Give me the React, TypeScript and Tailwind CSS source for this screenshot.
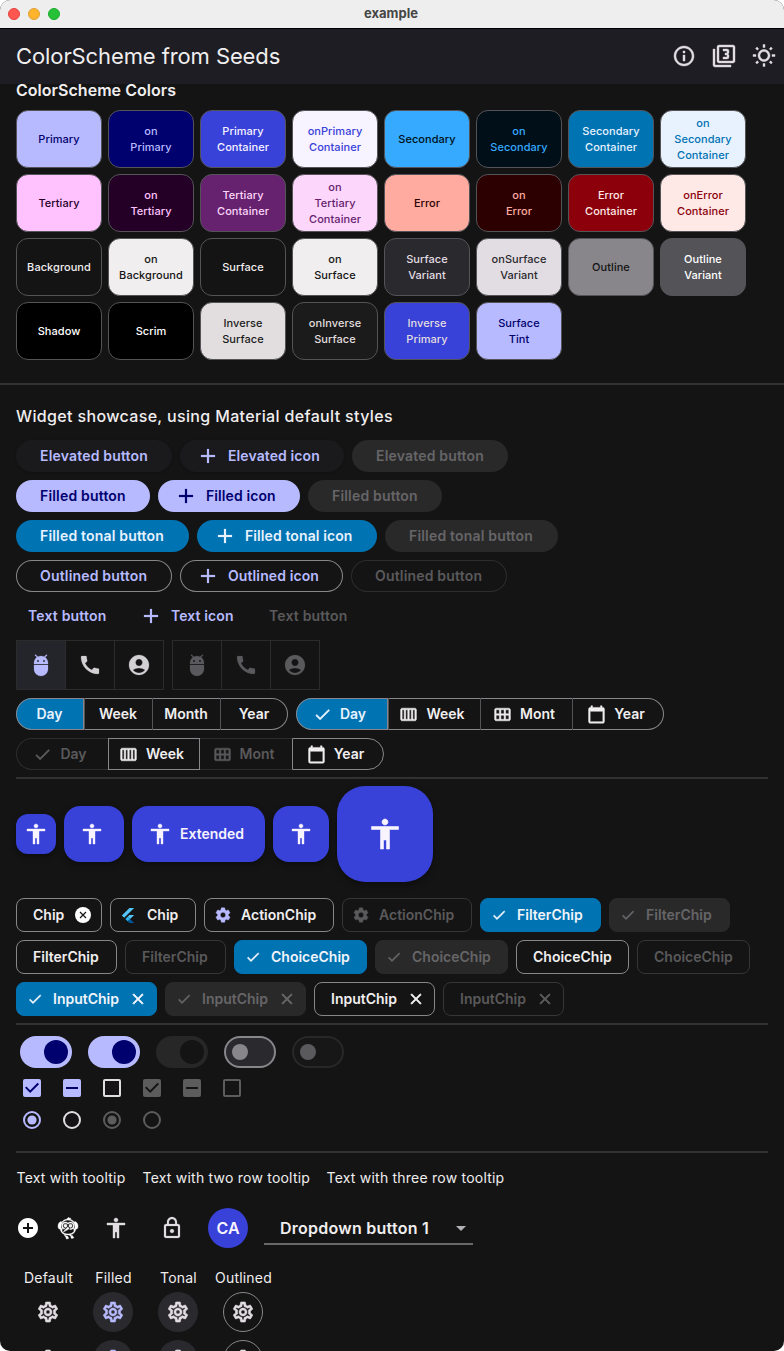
import type { ReactNode } from "react";
import {
  MdAccessibility,
  MdAccountCircle,
  MdAdb,
  MdAdd,
  MdAddCircle,
  MdArrowDropDown,
  MdCalendarToday,
  MdCalendarViewMonth,
  MdCalendarViewWeek,
  MdCall,
  MdCheck,
  MdClose,
  MdFlutterDash,
  MdInfoOutline,
  MdLockOutline,
  MdOutlineFilter3,
  MdOutlineSettings,
  MdOutlineWbSunny,
  MdSettings,
} from "react-icons/md";

const swatches: [string, string][] = [
  ["Primary", "bg-[#b7baff] text-[#00006e]"],
  ["on\nPrimary", "bg-[#00006e] text-[#b7baff]"],
  ["Primary\nContainer", "bg-[#3841d8] text-[#f7f3ff]"],
  ["onPrimary\nContainer", "bg-[#f7f3ff] text-[#3841d8]"],
  ["Secondary", "bg-[#35aaff] text-[#000f18]"],
  ["on\nSecondary", "bg-[#000f18] text-[#35aaff]"],
  ["Secondary\nContainer", "bg-[#0073b2] text-[#e8f2ff]"],
  ["on\nSecondary\nContainer", "bg-[#e8f2ff] text-[#0073b2]"],
  ["Tertiary", "bg-[#ffc2ff] text-[#240026]"],
  ["on\nTertiary", "bg-[#240026] text-[#ffc2ff]"],
  ["Tertiary\nContainer", "bg-[#66226e] text-[#fdd7fb]"],
  ["on\nTertiary\nContainer", "bg-[#fdd7fb] text-[#66226e]"],
  ["Error", "bg-[#ffaba0] text-[#2c0000]"],
  ["on\nError", "bg-[#2c0000] text-[#ffaba0]"],
  ["Error\nContainer", "bg-[#8b000b] text-[#ffe9e6]"],
  ["onError\nContainer", "bg-[#ffe9e6] text-[#8b000b]"],
  ["Background", "bg-[#141414] text-[#f0eeef]"],
  ["on\nBackground", "bg-[#f0eeef] text-[#141414]"],
  ["Surface", "bg-[#141414] text-[#f0eeef]"],
  ["on\nSurface", "bg-[#f0eeef] text-[#141414]"],
  ["Surface\nVariant", "bg-[#2a292e] text-[#e2dde3]"],
  ["onSurface\nVariant", "bg-[#e2dde3] text-[#2a292e]"],
  ["Outline", "bg-[#88868a] text-[#141414]"],
  ["Outline\nVariant", "bg-[#545358] text-white"],
  ["Shadow", "bg-black text-white"],
  ["Scrim", "bg-black text-white"],
  ["Inverse\nSurface", "bg-[#e2dedf] text-[#1b1b1b]"],
  ["onInverse\nSurface", "bg-[#1b1b1b] text-[#e2dedf]"],
  ["Inverse\nPrimary", "bg-[#3841d8] text-[#e2dedf]"],
  ["Surface\nTint", "bg-[#b7baff] text-[#00006e]"],
];

// Thickens glyph paths while leaving the invisible bounding-box path alone.
const heavy = "[&_path:not([fill=none])]:stroke-[0.6px]";
const medium = "[&_path:not([fill=none])]:stroke-[0.4px]";
const light = "[&_path:not([fill=none])]:stroke-[0.2px]";

function Button({ w, look, icon, children }: { w: string; look: string; icon?: boolean; children: ReactNode }) {
  return (
    <button
      className={`flex h-8 shrink-0 items-center rounded-full text-[14px] font-semibold whitespace-nowrap ${light} ${icon ? "gap-2 pl-4 tracking-[0.1px]" : "pl-6 tracking-[0.18px]"} ${w} ${look}`}
    >
      {icon && <MdAdd size={24} />}
      <span className="-mt-0.5">{children}</span>
    </button>
  );
}

function Row({ children, className = "" }: { children: ReactNode; className?: string }) {
  return <div className={`flex gap-2 ${className}`}>{children}</div>;
}

function Toggle({ active }: { active: boolean }) {
  return (
    <div className={`flex h-[50px] w-[148px] border border-[#2b2b2c] ${light} ${active ? "text-[#d3d0d4]" : "text-[#5a595c]"}`}>
      <div className={`flex w-[49px] items-center justify-center border-r border-[#2b2b2c] ${active ? "bg-[#24252b] text-[#b7baff]" : ""}`}>
        <MdAdb size={24} />
      </div>
      <div className="flex w-[49px] items-center justify-center border-r border-[#2b2b2c]">
        <MdCall size={24} />
      </div>
      <div className="flex w-12 items-center justify-center">
        <MdAccountCircle size={24} />
      </div>
    </div>
  );
}

function Segment({ look, icon, wide, children }: { look: string; icon?: ReactNode; wide?: boolean; children: ReactNode }) {
  return (
    <div className={`flex h-8 items-center justify-center gap-2 text-[14px] font-semibold ${heavy} ${wide ? "w-[92px] pr-[5px]" : "w-[68px] pr-px"} ${look}`}>
      {icon}
      <span className="-mt-0.5">{children}</span>
    </div>
  );
}

function Chip({ w, look, icon, tail, children }: { w: string; look: string; icon?: ReactNode; tail?: ReactNode; children: ReactNode }) {
  return (
    <div className={`flex h-[34px] shrink-0 items-center rounded-lg border pr-2 text-[14px] font-semibold whitespace-nowrap ${icon ? "gap-2 pl-2" : "pl-4"} ${w} ${look}`}>
      {icon && <span className={`flex w-5 justify-center ${heavy}`}>{icon}</span>}
      <span className="-mt-0.5">{children}</span>
      {tail && <span className="ml-auto flex w-5 justify-center">{tail}</span>}
    </div>
  );
}

const outlined = "border-[#88868a] text-[#f0eeef]";
const outlinedOff = "border-[#363638] text-[#5a595b]";
const selected = "border-[#0073b2] bg-[#0073b2] text-[#f0f4fb]";
const selectedOff = "border-[#292929] bg-[#292929] text-[#666568]";

function Divider() {
  return <div className="h-0.5 shrink-0 bg-[#313132]" />;
}

function FlutterMark() {
  return (
    <svg width="14" height="17" viewBox="0 0 166 202" className="-ml-0.5">
      <g stroke="none">
        <path fill="#54c5f8" d="M37.7 128.9 9.8 101 100.4 10.4h55.8z" />
        <path fill="#54c5f8" d="M156.2 94h-55.8L79.5 114.9l27.9 27.9z" />
        <path fill="#01579b" d="m79.5 170.7 20.9 20.9h55.8l-48.8-48.8z" />
        <path fill="#29b6f6" d="m51.7 142.8 27.8-27.8 27.9 27.8-27.9 27.9z" />
      </g>
    </svg>
  );
}

function CancelGlyph() {
  return (
    <svg width="16" height="16" viewBox="0 0 16 16">
      <circle cx="8" cy="8" r="8" fill="white" />
      <path d="M5 5l6 6M11 5l-6 6" stroke="#141414" strokeWidth="1.2" />
    </svg>
  );
}

function CloseGlyph() {
  return (
    <span className="flex [&_path:not([fill=none])]:stroke-[0.9px]">
      <MdClose size={18} />
    </span>
  );
}

function Switch({ track, thumb }: { track: string; thumb: string }) {
  return (
    <div className={`flex h-8 w-[52px] items-center rounded-full ${track}`}>
      <div className={`rounded-full ${thumb}`} />
    </div>
  );
}

function Box({ look, children }: { look: string; children?: ReactNode }) {
  return <div className={`flex size-[18px] items-center justify-center rounded-[2px] ${look}`}>{children}</div>;
}

function CheckGlyph() {
  return (
    <svg width="18" height="18" viewBox="0 0 18 18" fill="none" stroke="currentColor" strokeWidth="2">
      <path d="M2.7 8.1 7.2 12.6 15.3 4.5" />
    </svg>
  );
}

function Radio({ tone, on }: { tone: string; on?: boolean }) {
  return (
    <svg width="18" height="18" viewBox="0 0 18 18" className={tone}>
      <circle cx="9" cy="9" r="8" fill="none" stroke="currentColor" strokeWidth="2" />
      {on && <circle cx="9" cy="9" r="4.6" fill="currentColor" />}
    </svg>
  );
}

function GearButtons() {
  return (
    <div className={`flex gap-[25px] pl-[12.4px] text-[#e2dde3] ${heavy}`}>
      <div className="flex size-10 items-center justify-center"><MdOutlineSettings size={24} /></div>
      <div className="flex size-10 items-center justify-center rounded-full bg-[#2a292e] text-[#b7baff]"><MdOutlineSettings size={24} /></div>
      <div className="flex size-10 items-center justify-center rounded-full bg-[#2a292e]"><MdOutlineSettings size={24} /></div>
      <div className="flex size-10 items-center justify-center rounded-full border border-[#88868a]"><MdOutlineSettings size={24} /></div>
    </div>
  );
}

const fab = "flex items-center bg-[#3841d8] text-[#f7f3ff] shadow-[0_3px_6px_rgba(0,0,0,0.35)]";

export default function App() {
  return (
    <div className="h-[1351px] w-[784px] overflow-hidden bg-white font-['Inter','Liberation_Sans',sans-serif]">
      <div className="flex h-full flex-col overflow-hidden rounded-[10px] bg-[#141414] text-[#f0eeef]">
        <div className="grid h-[29px] shrink-0 grid-cols-[1fr_auto_1fr] items-center border-b border-black bg-[#eeeeee]">
          <div className="flex gap-2 pl-2">
            <div className="size-3 rounded-full border border-[#e0443e] bg-[#ff5650]" />
            <div className="size-3 rounded-full border border-[#dea034] bg-[#fdb32c]" />
            <div className="size-3 rounded-full border border-[#1aab29] bg-[#27c138]" />
          </div>
          <div className="pr-0.5 text-[13px] font-bold text-[#454545]">example</div>
        </div>

        <header className="flex h-[55px] shrink-0 items-center justify-between bg-[#1e1d23] pr-2 pl-4">
          <h1 className="text-[22px] tracking-[-0.1px]">ColorScheme from Seeds</h1>
          <div className={`mb-px flex gap-4 text-[#e2dde3] ${medium}`}>
            <MdInfoOutline size={24} />
            <MdOutlineFilter3 size={24} />
            <MdOutlineWbSunny size={24} />
          </div>
        </header>

        <section className="flex shrink-0 flex-col px-4 pb-[23px]">
          <h2 className="h-[26px] text-[16px] leading-3 font-semibold tracking-[0.04px]">ColorScheme Colors</h2>
          <div className="grid grid-cols-[repeat(8,86px)] gap-1.5">
            {swatches.map(([name, look]) => (
              <div
                key={name}
                className={`flex h-[58px] items-center justify-center rounded-xl border border-[#545358] text-center text-[11px] leading-4 font-medium tracking-[0.05px] whitespace-pre-line ${look}`}
              >
                {name}
              </div>
            ))}
          </div>
        </section>
        <Divider />

        <main className="flex flex-1 flex-col overflow-hidden px-4 pt-[19px]">
          <h2 className="mb-3 text-[16px] leading-6 font-medium tracking-[0.35px]">Widget showcase, using Material default styles</h2>

          <div className="flex shrink-0 flex-col gap-2">
            <Row>
              <Button w="w-[156px]" look="bg-[#1a1a1d] text-[#b7baff] shadow-sm">Elevated button</Button>
              <Button w="w-[164px]" look="bg-[#1a1a1d] text-[#b7baff] shadow-sm" icon>Elevated icon</Button>
              <Button w="w-[156px]" look="bg-[#292929] text-[#666568]">Elevated button</Button>
            </Row>
            <Row>
              <Button w="w-[134px]" look="bg-[#b7baff] text-[#00006e]">Filled button</Button>
              <Button w="w-[142px]" look="bg-[#b7baff] text-[#00006e]" icon>Filled icon</Button>
              <Button w="w-[134px]" look="bg-[#292929] text-[#666568]">Filled button</Button>
            </Row>
            <Row>
              <Button w="w-[173px]" look="bg-[#0073b2] text-[#e8f2ff]">Filled tonal button</Button>
              <Button w="w-[180px]" look="bg-[#0073b2] text-[#e8f2ff]" icon>Filled tonal icon</Button>
              <Button w="w-[173px]" look="bg-[#292929] text-[#666568]">Filled tonal button</Button>
            </Row>
            <Row>
              <Button w="w-[156px]" look="inset-ring inset-ring-[#88868a] text-[#b7baff]">Outlined button</Button>
              <Button w="w-[163px]" look="inset-ring inset-ring-[#88868a] text-[#b7baff]" icon>Outlined icon</Button>
              <Button w="w-[156px]" look="inset-ring inset-ring-[#2d2d2e] text-[#5a595b]">Outlined button</Button>
            </Row>
            <div className="flex h-8 items-center text-[#b7baff]">
              <Button w="-ml-3 w-[135px]" look="">Text button</Button>
              <Button w="-ml-4 w-[134px]" look="" icon>Text icon</Button>
              <Button w="-ml-3 w-[120px]" look="text-[#5a595b]">Text button</Button>
            </div>
            <Row>
              <Toggle active />
              <Toggle active={false} />
            </Row>
            <Row>
              <div className="flex w-[272px] overflow-hidden rounded-full inset-ring inset-ring-[#88868a]">
                <Segment look="rounded-l-full bg-[#0073b2] text-[#e8f2ff] inset-ring inset-ring-[#88868a]">Day</Segment>
                <Segment look="border-l border-[#545358]">Week</Segment>
                <Segment look="border-l border-[#545358]">Month</Segment>
                <Segment look="border-l border-[#545358]">Year</Segment>
              </div>
              <div className="flex w-[368px] overflow-hidden rounded-full inset-ring inset-ring-[#88868a]">
                <Segment wide icon={<MdCheck size={19} />} look="rounded-l-full bg-[#0073b2] text-[#e8f2ff] inset-ring inset-ring-[#88868a]">Day</Segment>
                <Segment wide icon={<MdCalendarViewWeek size={19} />} look="border-l border-[#545358]">Week</Segment>
                <Segment wide icon={<MdCalendarViewMonth size={19} />} look="border-l border-[#545358]">Mont</Segment>
                <Segment wide icon={<MdCalendarToday size={19} />} look="border-l border-[#545358]">Year</Segment>
              </div>
            </Row>
            <div className="flex">
              <Segment wide icon={<MdCheck size={19} />} look="rounded-l-full border-y border-l border-[#2d2d2e] text-[#5a595b]">Day</Segment>
              <Segment wide icon={<MdCalendarViewWeek size={19} />} look="border border-[#88868a]">Week</Segment>
              <Segment wide icon={<MdCalendarViewMonth size={19} />} look="border-y border-[#2d2d2e] text-[#5a595b]">Mont</Segment>
              <Segment wide icon={<MdCalendarToday size={19} />} look="rounded-r-full border border-[#88868a]">Year</Segment>
            </div>
          </div>

          <div className="mt-[7px] mb-[7px]"><Divider /></div>

          <div className={`flex shrink-0 items-center gap-2 ${medium}`}>
            <div className={`${fab} size-10 justify-center rounded-xl`}><MdAccessibility size={24} /></div>
            <div className={`${fab} h-14 w-[60px] rounded-2xl pl-4`}><MdAccessibility size={24} /></div>
            <div className={`${fab} h-14 w-[133px] gap-2 rounded-2xl pl-4 text-[14px] font-semibold`}>
              <MdAccessibility size={24} />
              <span className="-mt-0.5">Extended</span>
            </div>
            <div className={`${fab} size-14 justify-center rounded-2xl`}><MdAccessibility size={24} /></div>
            <div className={`${fab} size-24 justify-center rounded-[28px]`}><MdAccessibility size={36} /></div>
          </div>

          <div className="mt-4 flex shrink-0 flex-col gap-2">
            <Row>
              <Chip w="w-[86px]" look={outlined} tail={<CancelGlyph />}>Chip</Chip>
              <Chip w="w-[86px]" look={outlined} icon={<FlutterMark />}>Chip</Chip>
              <Chip w="w-[130px]" look={outlined} icon={<MdSettings size={18} className="text-[#b7baff]" />}>ActionChip</Chip>
              <Chip w="w-[130px]" look={outlinedOff} icon={<MdSettings size={18} />}>ActionChip</Chip>
              <Chip w="w-[121px]" look={selected} icon={<MdCheck size={16} />}>FilterChip</Chip>
              <Chip w="w-[121px]" look={selectedOff} icon={<MdCheck size={16} />}>FilterChip</Chip>
            </Row>
            <Row>
              <Chip w="w-[101px]" look={outlined}>FilterChip</Chip>
              <Chip w="w-[101px]" look={outlinedOff}>FilterChip</Chip>
              <Chip w="w-[133px]" look={selected} icon={<MdCheck size={16} />}>ChoiceChip</Chip>
              <Chip w="w-[133px]" look={selectedOff} icon={<MdCheck size={16} />}>ChoiceChip</Chip>
              <Chip w="w-[113px]" look={outlined}>ChoiceChip</Chip>
              <Chip w="w-[113px]" look={outlinedOff}>ChoiceChip</Chip>
            </Row>
            <Row>
              <Chip w="w-[141px]" look={selected} icon={<MdCheck size={16} />} tail={<CloseGlyph />}>InputChip</Chip>
              <Chip w="w-[141px]" look={selectedOff} icon={<MdCheck size={16} />} tail={<CloseGlyph />}>InputChip</Chip>
              <Chip w="w-[121px]" look={outlined} tail={<CloseGlyph />}>InputChip</Chip>
              <Chip w="w-[121px]" look={outlinedOff} tail={<CloseGlyph />}>InputChip</Chip>
            </Row>
          </div>

          <div className="mt-[7px] mb-[11px]"><Divider /></div>

          <div className="flex shrink-0 gap-4 pl-1">
            <Switch track="bg-[#b7baff] pl-6" thumb="size-6 bg-[#00006e]" />
            <Switch track="bg-[#b7baff] pl-6" thumb="size-6 bg-[#00006e]" />
            <Switch track="bg-[#272727] pl-6" thumb="size-6 bg-[#141414]" />
            <Switch track="border-2 border-[#88868a] bg-[#2a292e] pl-1.5" thumb="size-4 bg-[#88868a]" />
            <Switch track="border-2 border-[#282828] bg-[#171717] pl-1.5" thumb="size-4 bg-[#5a595b]" />
          </div>
          <div className="mt-[11px] flex shrink-0 gap-[22px] pl-[7px]">
            <Box look="bg-[#b7baff] text-[#00006e]"><CheckGlyph /></Box>
            <Box look="bg-[#b7baff]"><div className="h-0.5 w-3 bg-[#00006e]" /></Box>
            <Box look="border-2 border-[#e2dde3]" />
            <Box look="bg-[#5c5c5d] text-[#141414]"><CheckGlyph /></Box>
            <Box look="bg-[#5c5c5d]"><div className="h-0.5 w-3 bg-[#141414]" /></Box>
            <Box look="border-2 border-[#5c5c5d]" />
          </div>
          <div className="mt-[14px] flex shrink-0 gap-[22px] pl-[7px]">
            <Radio tone="text-[#b7baff]" on />
            <Radio tone="text-[#e2dde3]" />
            <Radio tone="text-[#5c5c5d]" on />
            <Radio tone="text-[#5c5c5d]" />
          </div>

          <div className="mt-[22px] mb-[15px]"><Divider /></div>

          <div className="flex shrink-0 pl-[0.5px] text-[14px] leading-5 tracking-[0.22px] whitespace-nowrap">
            <span className="w-[126px]">Text with tooltip</span>
            <span className="w-[184px]">Text with two row tooltip</span>
            <span>Text with three row tooltip</span>
          </div>

          <div className="mt-5 flex h-10 shrink-0 items-center text-white">
            <div className="flex w-10"><MdAddCircle size={24} /></div>
            <div className={`flex w-[48px] ${medium}`}><MdFlutterDash size={24} /></div>
            <div className={`flex w-14 text-[#e2dde3] ${medium}`}><MdAccessibility size={24} /></div>
            <div className={`flex w-12 text-[#e2dde3] ${light}`}><MdLockOutline size={24} /></div>
            <div className="flex size-10 items-center justify-center rounded-full bg-[#3841d8] text-[16px] font-semibold text-[#f7f3ff]">CA</div>
            <div className="ml-4 flex h-[34px] w-[209px] items-center border-b-2 border-[#69686b] pt-0.5 pl-4 text-[#f0eeef]">
              <span className="flex-1 text-[16px] font-semibold tracking-[0.25px]">Dropdown button 1</span>
              <MdArrowDropDown size={24} className="text-[#b4b1b6]" />
            </div>
          </div>

          <div className="mt-5 mb-1 grid shrink-0 grid-cols-[repeat(4,65px)] text-center text-[14px] leading-5 tracking-[0.2px]">
            <span>Default</span>
            <span>Filled</span>
            <span>Tonal</span>
            <span>Outlined</span>
          </div>
          <div className="flex shrink-0 flex-col gap-2">
            <GearButtons />
            <GearButtons />
          </div>
        </main>
      </div>
    </div>
  );
}
